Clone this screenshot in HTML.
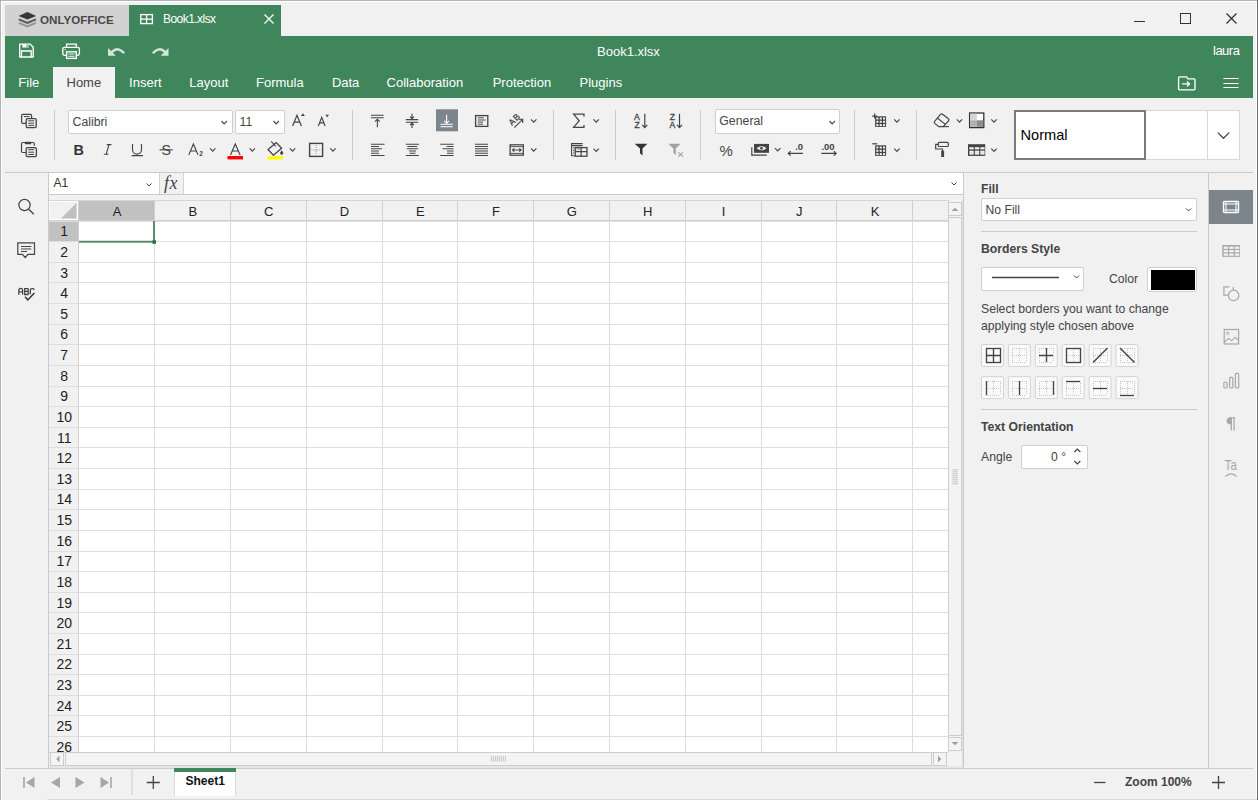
<!DOCTYPE html><html><head><meta charset="utf-8"><style>
*{margin:0;padding:0;box-sizing:border-box}
html,body{width:1258px;height:800px;overflow:hidden;background:#f1f1f1;font-family:"Liberation Sans",sans-serif;position:relative}
.a{position:absolute}
.t{position:absolute;white-space:nowrap;line-height:1}
svg{position:absolute;overflow:visible}
</style></head><body>
<div class="a" style="left:0;top:0;width:1258px;height:1px;background:#b3b3b3"></div>
<div class="a" style="left:0;top:0;width:1px;height:800px;background:#b3b3b3"></div>
<div class="a" style="left:1256px;top:1px;width:1px;height:799px;background:#fff"></div>
<div class="a" style="left:1257px;top:0;width:1px;height:800px;background:#6a6a6a"></div>
<div class="a" style="left:1px;top:1px;width:1256px;height:1px;background:#fff"></div>
<div class="a" style="left:1px;top:1px;width:1px;height:799px;background:#fff"></div>
<div class="a" style="left:5px;top:5px;width:124px;height:31px;background:#d2d2d2"></div>
<div class="a" style="left:129px;top:5px;width:152px;height:31px;background:#40865c"></div>
<svg style="left:0;top:0" width="1258" height="800">
<path d="M27.4 12 L36.2 16 L27.4 19.6 L18.6 16 Z" fill="#383838"/>
<path d="M18.8 19.4 L27.4 23 L36 19.4" fill="none" stroke="#585858" stroke-width="1.9"/>
<path d="M18.8 22.9 L27.4 26.5 L36 22.9" fill="none" stroke="#959595" stroke-width="1.9"/>
</svg>
<div class="t" style="left:40px;top:14px;font-size:11.6px;font-weight:bold;color:#474747;letter-spacing:0px">ONLYOFFICE</div>
<svg style="left:0;top:0" width="1258" height="800">
<rect x="140.8" y="14.6" width="11.6" height="9" fill="none" stroke="#fff" stroke-width="1.3"/>
<path d="M146.6 14.6 V23.6 M140.8 19.1 H152.4" stroke="#fff" stroke-width="1.3"/>
</svg>
<div class="t" style="left:163px;top:13px;font-size:12px;letter-spacing:-0.55px;color:#fff">Book1.xlsx</div>
<svg style="left:264px;top:14px" width="10" height="10" viewBox="0 0 10 10">
<path d="M0.5 0.5 L9.5 9.5 M9.5 0.5 L0.5 9.5" stroke="#fff" stroke-width="1.3"/></svg>
<div class="a" style="left:1134px;top:21px;width:11px;height:1px;background:#333"></div>
<div class="a" style="left:1180px;top:13px;width:11px;height:11px;border:1.3px solid #333"></div>
<svg style="left:1226px;top:13px" width="11" height="11" viewBox="0 0 11 11">
<path d="M0.5 0.5 L10.5 10.5 M10.5 0.5 L0.5 10.5" stroke="#333" stroke-width="1.3"/></svg>
<div class="a" style="left:5px;top:36px;width:1248px;height:62px;background:#40865c"></div>
<svg style="left:0;top:0" width="1258" height="800">
<path d="M19.7 44.1 H30.2 L33.2 47.3 V57 H19.7 Z" fill="none" stroke="#fff" stroke-width="1.35" stroke-linejoin="round"/>
<path d="M22.3 44.1 h6.2 v3.4 h-6.2 z" fill="#fff"/>
<path d="M27.1 44.6 v2.4" stroke="#40865c" stroke-width="1"/>
<path d="M21.5 57 V51 H31.2 V57" fill="none" stroke="#fff" stroke-width="1.35"/>
</svg>
<svg style="left:0;top:0" width="1258" height="800">
<path d="M66.6 47.2 V44.1 H76.3 V47.2" fill="none" stroke="#fff" stroke-width="1.35"/>
<rect x="62.8" y="47.3" width="16.6" height="8" rx="1.8" fill="none" stroke="#fff" stroke-width="1.35"/>
<rect x="66.6" y="51.8" width="9.7" height="6.6" fill="#40865c" stroke="#fff" stroke-width="1.35"/>
<path d="M68.3 54 H74.6 M68.3 56.3 H74.6" stroke="#fff" stroke-width="0.9"/>
<circle cx="65.2" cy="49.5" r="0.7" fill="#fff"/>
</svg>
<svg style="left:0;top:0" width="1258" height="800" opacity="0.78">
<path d="M111.5 52.5 Q117.5 45.8 124.2 53.2" fill="none" stroke="#fff" stroke-width="2.4"/>
<path d="M108 48 V55.8 H115.8 Z" fill="#fff"/>
<path d="M152.8 53.2 Q159.5 45.8 165.5 52.5" fill="none" stroke="#fff" stroke-width="2.4"/>
<path d="M168.5 48 V55.8 H160.7 Z" fill="#fff"/>
</svg>
<div class="t" style="left:597px;top:45px;font-size:13px;color:#fff">Book1.xlsx</div>
<div class="t" style="left:1213px;top:44px;font-size:13px;letter-spacing:-0.5px;color:#fff">laura</div>
<div class="a" style="left:53px;top:67px;width:62px;height:31px;background:#f1f1f1"></div>
<div class="t" style="left:18.3px;top:75.5px;font-size:13px;color:#fff">File</div>
<div class="t" style="left:66.5px;top:75.5px;font-size:13px;color:#444">Home</div>
<div class="t" style="left:129.1px;top:75.5px;font-size:13px;color:#fff">Insert</div>
<div class="t" style="left:189.3px;top:75.5px;font-size:13px;color:#fff">Layout</div>
<div class="t" style="left:256.0px;top:75.5px;font-size:13px;color:#fff">Formula</div>
<div class="t" style="left:331.9px;top:75.5px;font-size:13px;color:#fff">Data</div>
<div class="t" style="left:386.6px;top:75.5px;font-size:13px;color:#fff">Collaboration</div>
<div class="t" style="left:492.7px;top:75.5px;font-size:13px;color:#fff">Protection</div>
<div class="t" style="left:579.5px;top:75.5px;font-size:13px;color:#fff">Plugins</div>
<svg style="left:0;top:0" width="1258" height="800">
<path d="M1178.6 77.8 a1 1 0 0 1 1 -1 H1186.6 L1188 78.8 H1194 a1 1 0 0 1 1 1 V88.8 a1 1 0 0 1 -1 1 H1179.6 a1 1 0 0 1 -1 -1 Z" fill="none" stroke="#fff" stroke-width="1.35"/>
<path d="M1182 83.9 H1189.3 M1187 81.5 L1189.5 83.9 L1187 86.3" fill="none" stroke="#fff" stroke-width="1.35"/>
</svg>
<svg style="left:1223px;top:77px" width="16" height="12" viewBox="0 0 16 12">
<path d="M0.4 1.5 H15.6 M0.4 6.5 H15.6 M0.4 10.5 H15.6" stroke="#fff" stroke-width="1.2"/></svg>
<div class="a" style="left:5px;top:172px;width:1248px;height:1px;background:#cbcbcb"></div>
<div class="a" style="left:54px;top:110px;width:1px;height:50px;background:#cbcbcb"></div>
<div class="a" style="left:352px;top:110px;width:1px;height:50px;background:#cbcbcb"></div>
<div class="a" style="left:553px;top:110px;width:1px;height:50px;background:#cbcbcb"></div>
<div class="a" style="left:615px;top:110px;width:1px;height:50px;background:#cbcbcb"></div>
<div class="a" style="left:700px;top:110px;width:1px;height:50px;background:#cbcbcb"></div>
<div class="a" style="left:854px;top:110px;width:1px;height:50px;background:#cbcbcb"></div>
<div class="a" style="left:916px;top:110px;width:1px;height:50px;background:#cbcbcb"></div>
<div class="a" style="left:68px;top:110px;width:165px;height:24px;background:#fff;border:1px solid #cfcfcf;border-radius:2px"></div>
<div class="t" style="left:72.5px;top:116px;font-size:12.3px;color:#444">Calibri</div>
<div class="a" style="left:235px;top:110px;width:50px;height:24px;background:#fff;border:1px solid #cfcfcf;border-radius:2px"></div>
<div class="t" style="left:239.5px;top:116px;font-size:12.3px;color:#444">11</div>
<div class="a" style="left:715px;top:109px;width:125px;height:25px;background:#fff;border:1px solid #cfcfcf;border-radius:2px"></div>
<div class="t" style="left:719.3px;top:115px;font-size:12.3px;color:#444">General</div>
<svg style="left:0;top:0" width="1258" height="800" viewBox="0 0 1258 800"><rect x="21.6" y="114.3" width="10" height="9" rx="1.3" stroke="#444" fill="none" stroke-width="1.2"/><path d="M23.8 116.6 h6" stroke="#444" stroke-width="1"/><rect x="26.2" y="118.6" width="10" height="9" rx="1.3" fill="#f1f1f1" stroke="#444" stroke-width="1.3"/><path d="M28.2 120.8 h6 M28.2 123.2 h6 M28.2 125.4 h6" stroke="#444" stroke-width="1"/><path d="M26 152.5 h-3.3 a1.2 1.2 0 0 1 -1.2 -1.2 v-7.6 a1.2 1.2 0 0 1 1.2 -1.2 h10.4 a1.2 1.2 0 0 1 1.2 1.2 v2" stroke="#444" fill="none" stroke-width="1.2"/><rect x="24.8" y="141.8" width="6.5" height="2.5" rx="0.8" fill="#444"/><rect x="26.2" y="147.6" width="10.2" height="9" rx="1.3" fill="#f1f1f1" stroke="#444" stroke-width="1.3"/><path d="M28.2 149.7 h6 M28.2 152.2 h6 M28.2 154.5 h6" stroke="#444" stroke-width="1"/><path d="M221.5 121.0 l2.7 2.8 l2.7 -2.8" fill="none" stroke="#444" stroke-width="1.15"/><path d="M273.5 121.0 l2.7 2.8 l2.7 -2.8" fill="none" stroke="#444" stroke-width="1.15"/><path d="M829.5 121.0 l2.7 2.8 l2.7 -2.8" fill="none" stroke="#444" stroke-width="1.15"/><path d="M292.6 126 L297 115.3 L301.4 126 M294.2 122.2 H299.8" fill="none" stroke="#444" stroke-width="1.2"/><path d="M301 116 l1.9 -2.8 l1.9 2.8 z" fill="#444"/><path d="M318.3 126 L321.7 117.3 L325.1 126 M319.5 122.9 H323.9" fill="none" stroke="#444" stroke-width="1.15"/><path d="M325.4 114.8 l1.8 2.4 l1.8 -2.4 z" fill="#444"/><text x="73.6" y="154.6" font-family="Liberation Sans" font-weight="bold" font-size="14.4" fill="#333">B</text><path d="M106.8 144.6 h4.6 M103.8 154.2 h4.6 M109 144.6 L106.2 154.2" fill="none" stroke="#444" stroke-width="1.1"/><path d="M132.5 144 v5.6 a4.5 4.5 0 0 0 9 0 v-5.6 M131.6 155.6 h11.4" fill="none" stroke="#444" stroke-width="1.15"/><text x="161.6" y="154.6" font-family="Liberation Sans" font-size="14.2" fill="#444">S</text><path d="M159.6 149.8 h13" stroke="#444" stroke-width="1.15"/><path d="M188.8 154.9 L193.4 144 L198 154.9 M190.6 151 H196.2" fill="none" stroke="#444" stroke-width="1.15"/><text x="199.2" y="155.8" font-family="Liberation Sans" font-weight="bold" font-size="6.4" fill="#444">2</text><path d="M210.0 148.3 l2.7 2.8 l2.7 -2.8" fill="none" stroke="#444" stroke-width="1.15"/><path d="M230.5 154.9 L235.3 144 L240.1 154.9 M232.3 151 H238.3" fill="none" stroke="#444" stroke-width="1.15"/><rect x="227.5" y="156" width="15.5" height="3.4" fill="#f00"/><path d="M249.6 148.3 l2.7 2.8 l2.7 -2.8" fill="none" stroke="#444" stroke-width="1.15"/><path d="M276.3 142.6 L281.6 148.2 L273.4 155.2 L268 149.5 Z" fill="none" stroke="#444" stroke-width="1.25" stroke-linejoin="round"/><path d="M271.2 141.4 L275.7 146.3" stroke="#444" stroke-width="1.1"/><path d="M281.7 150.2 l1.5 2.3 a1.6 1.6 0 1 1 -3 0 z" fill="#444"/><rect x="267.7" y="156.1" width="15.3" height="3.4" fill="#ff0"/><path d="M289.8 148.3 l2.7 2.8 l2.7 -2.8" fill="none" stroke="#444" stroke-width="1.15"/><rect x="309.6" y="143.4" width="13" height="13" fill="none" stroke="#444" stroke-width="1.4"/><path d="M316.1 145 v10 M311.2 149.9 h10" stroke="#999" stroke-width="1" stroke-dasharray="1 1"/><path d="M330.2 148.3 l2.7 2.8 l2.7 -2.8" fill="none" stroke="#444" stroke-width="1.15"/><path d="M371 115.2 h12.6 M371 117.8 h12.6 M377.4 127.2 V119.2 M375 121.6 l2.4 -2.4 l2.4 2.4" fill="none" stroke="#444" stroke-width="1.1"/><path d="M405.8 119.6 h12.4 M405.8 122.3 h12.4 M412 113.7 v5 M410 116.7 l2 2 l2 -2 M412 128 v-5 M410 125.1 l2 -2 l2 2" fill="none" stroke="#444" stroke-width="1.1"/><rect x="436" y="109.3" width="22" height="22" fill="#7d858c"/><path d="M440.5 124.2 h12.3 M440.5 126.8 h12.3 M446.6 114.7 v8.6 M444.2 120.9 l2.4 2.4 l2.4 -2.4" fill="none" stroke="#fff" stroke-width="1.1"/><rect x="475.6" y="115.6" width="12.2" height="10.8" fill="none" stroke="#444" stroke-width="1.3"/><path d="M477.8 117.8 h6 M477.8 120 h8 M477.8 122.1 h5.2 M477.8 124.2 h5.2" stroke="#444" stroke-width="0.95"/><text x="0" y="0" font-family="Liberation Sans" font-size="8.6" fill="#444" stroke="#444" stroke-width="0.3" letter-spacing="0.8" transform="translate(512 125.9) rotate(-45)">AB</text><path d="M514.3 127.6 L522.6 119.3 M518.8 119.2 h3.9 v3.9" fill="none" stroke="#444" stroke-width="1.15"/><path d="M531.0 119.3 l2.7 2.8 l2.7 -2.8" fill="none" stroke="#444" stroke-width="1.15"/><path d="M371.0 144.2 H384.6 M371.0 146.5 H379.0 M371.0 148.7 H382.0 M371.0 151.0 H379.0 M371.0 153.3 H379.0 M371.0 155.5 H384.6 " stroke="#444" stroke-width="1.05"/><path d="M405.8 144.2 H418.9 M407.4 146.5 H417.2 M406.8 148.7 H418.2 M409.0 151.0 H416.0 M409.4 153.3 H415.6 M405.8 155.5 H418.9 " stroke="#444" stroke-width="1.05"/><path d="M440.2 144.2 H453.6 M446.6 146.5 H453.6 M442.5 148.7 H453.6 M447.0 151.0 H453.6 M447.0 153.3 H453.6 M440.2 155.5 H453.6 " stroke="#444" stroke-width="1.05"/><path d="M475.0 144.2 H488.0 M475.0 146.5 H488.0 M475.0 148.7 H488.0 M475.0 151.0 H488.0 M475.0 153.3 H488.0 M475.0 155.5 H488.0 " stroke="#444" stroke-width="1.05"/><rect x="510.1" y="144.8" width="13.2" height="10.4" fill="none" stroke="#444" stroke-width="1.25"/><path d="M510 146.6 h13.4 M510 153.4 h13.4" stroke="#444" stroke-width="0.9"/><path d="M512.3 150 h9 M514.3 148.4 l-1.8 1.6 l1.8 1.6 M519.3 148.4 l1.8 1.6 l-1.8 1.6" fill="none" stroke="#444" stroke-width="1.1"/><path d="M531.0 148.3 l2.7 2.8 l2.7 -2.8" fill="none" stroke="#444" stroke-width="1.15"/><path d="M584 116.4 V114.2 H573.6 L579.2 120.8 L573.6 127.3 H584 V125" fill="none" stroke="#444" stroke-width="1.25"/><path d="M593.5 119.4 l2.7 2.8 l2.7 -2.8" fill="none" stroke="#444" stroke-width="1.15"/><path d="M571.6 143.6 h11 M571.6 145.6 h11 M571.6 143 V156 M573.6 147.5 v1 M573.6 150 v1 M573.6 152.5 v1 M571.6 155.8 h3" fill="none" stroke="#444" stroke-width="1.1"/><rect x="575.2" y="147.6" width="11.8" height="8.6" fill="#f1f1f1" stroke="#444" stroke-width="1.3"/><path d="M575.2 151.6 h11.8 M581.1 147.6 v8.6" stroke="#444" stroke-width="1.2"/><path d="M576.6 149 h3.4" stroke="#999" stroke-width="1.4"/><path d="M593.5 148.7 l2.7 2.8 l2.7 -2.8" fill="none" stroke="#444" stroke-width="1.15"/><text x="634" y="120.2" font-family="Liberation Sans" font-size="8.6" fill="#444" stroke="#444" stroke-width="0.3">A</text><text x="634.4" y="128.2" font-family="Liberation Sans" font-size="8.6" fill="#444" stroke="#444" stroke-width="0.3">Z</text><path d="M644.8 113.8 v13.4 M642.3 124.9 l2.5 2.8 l2.5 -2.8" fill="none" stroke="#444" stroke-width="1.2"/><text x="669.8" y="120.2" font-family="Liberation Sans" font-size="8.6" fill="#444" stroke="#444" stroke-width="0.3">Z</text><text x="669.4" y="128.2" font-family="Liberation Sans" font-size="8.6" fill="#444" stroke="#444" stroke-width="0.3">A</text><path d="M679.5 113.8 v13.4 M677 124.9 l2.5 2.8 l2.5 -2.8" fill="none" stroke="#444" stroke-width="1.2"/><path d="M634.7 143.7 H647.4 L642.5 148.6 V155.4 L640 153.2 V148.6 Z" fill="#333"/><path d="M668.2 143.7 H680.6 L675.8 148.6 V155 L673.4 152.8 V148.6 Z" fill="#a3a3a3"/><path d="M678.3 152.4 l4.6 4.2 M682.9 152.4 l-4.6 4.2" stroke="#a3a3a3" stroke-width="1.1"/><text x="719.6" y="156" font-family="Liberation Sans" font-size="15" fill="#444">%</text><rect x="754" y="143.9" width="15" height="8.9" fill="#444"/><path d="M756.5 148.3 q4.9 -4 10 0 q-5.1 4 -10 0 z" fill="#f1f1f1"/><circle cx="761.5" cy="148.3" r="1.4" fill="#444"/><path d="M751.8 147.2 v8 h15" fill="none" stroke="#444" stroke-width="1.2"/><path d="M775.0 148.2 l2.7 2.8 l2.7 -2.8" fill="none" stroke="#444" stroke-width="1.15"/><text x="795.2" y="149.6" font-family="Liberation Sans" font-size="9.5" font-weight="bold" fill="#444">.0</text><path d="M803 153.4 h-14.5 M790.6 151.2 l-2.3 2.2 l2.3 2.2" fill="none" stroke="#444" stroke-width="1.2"/><text x="821.4" y="149.6" font-family="Liberation Sans" font-size="9.5" font-weight="bold" fill="#444">.00</text><path d="M821.2 153.4 h14.8 M833.8 151.2 l2.3 2.2 l-2.3 2.2" fill="none" stroke="#444" stroke-width="1.2"/><rect x="875.1" y="116.3" width="11" height="10.6" fill="#444"/><rect x="876.3" y="117.5" width="2.1" height="2" fill="#f1f1f1"/><rect x="876.3" y="120.8" width="2.1" height="2" fill="#f1f1f1"/><rect x="876.3" y="124.1" width="2.1" height="2" fill="#f1f1f1"/><rect x="879.7" y="117.5" width="2.1" height="2" fill="#f1f1f1"/><rect x="879.7" y="120.8" width="2.1" height="2" fill="#f1f1f1"/><rect x="879.7" y="124.1" width="2.1" height="2" fill="#f1f1f1"/><rect x="883.0" y="117.5" width="2.1" height="2" fill="#f1f1f1"/><rect x="883.0" y="120.8" width="2.1" height="2" fill="#f1f1f1"/><rect x="883.0" y="124.1" width="2.1" height="2" fill="#f1f1f1"/><path d="M872.2 116.1 h5 M874.7 113.6 v5" stroke="#444" stroke-width="1.2"/><path d="M894.2 119.3 l2.7 2.8 l2.7 -2.8" fill="none" stroke="#444" stroke-width="1.15"/><rect x="875.1" y="145.3" width="11" height="10.6" fill="#444"/><rect x="876.3" y="146.5" width="2.1" height="2" fill="#f1f1f1"/><rect x="876.3" y="149.8" width="2.1" height="2" fill="#f1f1f1"/><rect x="876.3" y="153.1" width="2.1" height="2" fill="#f1f1f1"/><rect x="879.7" y="146.5" width="2.1" height="2" fill="#f1f1f1"/><rect x="879.7" y="149.8" width="2.1" height="2" fill="#f1f1f1"/><rect x="879.7" y="153.1" width="2.1" height="2" fill="#f1f1f1"/><rect x="883.0" y="146.5" width="2.1" height="2" fill="#f1f1f1"/><rect x="883.0" y="149.8" width="2.1" height="2" fill="#f1f1f1"/><rect x="883.0" y="153.1" width="2.1" height="2" fill="#f1f1f1"/><path d="M872.2 143.8 h5" stroke="#444" stroke-width="1.2"/><path d="M894.2 148.6 l2.7 2.8 l2.7 -2.8" fill="none" stroke="#444" stroke-width="1.15"/><path d="M942.6 114.2 L948.4 118.8 a1.5 1.5 0 0 1 0.2 2.1 L943.2 126.6 H938.8 L934.8 123.4 a1.5 1.5 0 0 1 -0.2 -2.1 L940.5 114.4 a1.5 1.5 0 0 1 2.1 -0.2 Z" fill="none" stroke="#444" stroke-width="1.2"/><path d="M937.6 118.2 L945.8 124.6" stroke="#444" stroke-width="1.1"/><path d="M943 126.6 h6" stroke="#444" stroke-width="1.1"/><path d="M956.8 119.3 l2.7 2.8 l2.7 -2.8" fill="none" stroke="#444" stroke-width="1.15"/><rect x="969.6" y="113" width="14.2" height="14.6" fill="#fff" stroke="#333" stroke-width="1.3"/><rect x="970.3" y="113.7" width="6.5" height="6.6" fill="#d4d4d4"/><rect x="970.3" y="120.3" width="6.5" height="6.6" fill="#b0b0b0"/><rect x="976.8" y="120.3" width="6.4" height="6.6" fill="#8e8e8e"/><path d="M991.3 119.3 l2.7 2.8 l2.7 -2.8" fill="none" stroke="#444" stroke-width="1.15"/><rect x="938.3" y="142.3" width="10" height="4.2" rx="0.9" fill="none" stroke="#444" stroke-width="1.2"/><path d="M938.3 144.4 h-2.6 v4.6 h6.8 v2" fill="none" stroke="#444" stroke-width="1.2"/><rect x="941.2" y="150.8" width="2.9" height="6.2" fill="#444"/><rect x="968" y="144.2" width="17.2" height="11.7" fill="#444"/><rect x="969.4" y="147.2" width="4.3" height="2.2" fill="#f1f1f1"/><rect x="969.4" y="150.7" width="4.3" height="2.2" fill="#f1f1f1"/><rect x="974.9" y="147.2" width="4.3" height="2.2" fill="#f1f1f1"/><rect x="974.9" y="150.7" width="4.3" height="2.2" fill="#f1f1f1"/><rect x="980.3" y="147.2" width="4.3" height="2.2" fill="#f1f1f1"/><rect x="980.3" y="150.7" width="4.3" height="2.2" fill="#f1f1f1"/><rect x="969.4" y="152.9" width="4.3" height="1.7" fill="#f1f1f1"/><rect x="974.85" y="152.9" width="4.3" height="1.7" fill="#f1f1f1"/><rect x="980.3" y="152.9" width="4.3" height="1.7" fill="#f1f1f1"/><path d="M991.3 148.6 l2.7 2.8 l2.7 -2.8" fill="none" stroke="#444" stroke-width="1.15"/></svg>
<div class="a" style="left:1014px;top:110px;width:226px;height:50px;background:#fff;border:1px solid #d8d8d8"></div>
<div class="a" style="left:1014px;top:110px;width:132px;height:50px;border:2px solid #7a7a7a"></div>
<div class="a" style="left:1207px;top:111px;width:1px;height:48px;background:#d8d8d8"></div>
<div class="t" style="left:1020.5px;top:128px;font-size:14.6px;color:#000">Normal</div>
<svg style="left:1217px;top:132px" width="13" height="7" viewBox="0 0 13 7"><path d="M0.8 0.6 L6.5 6.3 L12.2 0.6" fill="none" stroke="#444" stroke-width="1.25"/></svg>
<div class="a" style="left:48px;top:173px;width:1px;height:595px;background:#cbcbcb"></div>
<svg style="left:0;top:0" width="1258" height="800" viewBox="0 0 1258 800"><circle cx="24.5" cy="205" r="5.6" fill="none" stroke="#444" stroke-width="1.2"/><path d="M28.5 209 L33.8 214.3" stroke="#444" stroke-width="1.3"/><path d="M17.8 242.8 h16.7 v11.5 h-6.5 l-2.8 3.2 l-2.8 -3.2 h-4.6 Z" fill="none" stroke="#444" stroke-width="1.2"/><path d="M21 246.5 h10.3 M21 249 h10.3 M21 251.5 h6" stroke="#444" stroke-width="1.1"/><path d="M18.8 294.7 V290.3 a1.9 1.9 0 0 1 3.8 0 V294.7 M18.8 291.9 h3.8" fill="none" stroke="#444" stroke-width="1.3"/><path d="M24.7 288.7 h2.9 a0.6 0.6 0 0 1 0.6 0.6 v4.6 a0.6 0.6 0 0 1 -0.6 0.6 h-2.9 Z M24.7 291.4 h3.5" fill="none" stroke="#444" stroke-width="1.3"/><path d="M30.3 294.3 V290.5 a1.8 1.8 0 0 1 1.8 -1.8 h0.6 a1.4 1.4 0 0 1 1.4 1.4" fill="none" stroke="#444" stroke-width="1.3"/><path d="M25.1 296.7 L27.8 299.9 L34.4 293.1" fill="none" stroke="#333" stroke-width="1.5"/></svg>
<div class="a" style="left:49px;top:173px;width:914px;height:22px;background:#fff"></div>
<div class="a" style="left:49px;top:194px;width:914px;height:1px;background:#cbcbcb"></div>
<div class="a" style="left:159px;top:173px;width:1px;height:21px;background:#d4d4d4"></div>
<div class="a" style="left:160px;top:173px;width:23px;height:21px;background:#f1f1f1"></div>
<div class="a" style="left:183px;top:173px;width:1px;height:21px;background:#d4d4d4"></div>
<div class="t" style="left:53.5px;top:177px;font-size:12px;color:#333">A1</div>
<div class="t" style="left:164px;top:174px;font-size:18px;letter-spacing:0.6px;color:#444;font-family:'Liberation Serif',serif;font-style:italic">fx</div>
<svg style="left:0;top:0" width="1258" height="800"><path d="M146.5 183.5 l2.5 2.5 l2.5 -2.5" fill="none" stroke="#444"/><path d="M951.5 182.5 l2.5 2.5 l2.5 -2.5" fill="none" stroke="#444"/></svg>
<div class="a" style="left:49px;top:200px;width:899px;height:552px;background:#fff;overflow:hidden">
<div class="a" style="left:0;top:0;width:899px;height:21px;background:#f1f1f1"></div>
<div class="a" style="left:0;top:0;width:29px;height:552px;background:#f1f1f1"></div>
<div class="a" style="left:30px;top:0;width:75px;height:21px;background:#c1c1c1"></div>
<div class="a" style="left:0;top:21px;width:29px;height:21px;background:#c1c1c1"></div>
<svg style="left:0;top:0" width="899" height="552"><path d="M105.5 0 V552" stroke="#dcdcdc" stroke-width="1"/><path d="M181.5 0 V552" stroke="#dcdcdc" stroke-width="1"/><path d="M257.5 0 V552" stroke="#dcdcdc" stroke-width="1"/><path d="M333.5 0 V552" stroke="#dcdcdc" stroke-width="1"/><path d="M408.5 0 V552" stroke="#dcdcdc" stroke-width="1"/><path d="M484.5 0 V552" stroke="#dcdcdc" stroke-width="1"/><path d="M560.5 0 V552" stroke="#dcdcdc" stroke-width="1"/><path d="M636.5 0 V552" stroke="#dcdcdc" stroke-width="1"/><path d="M712.5 0 V552" stroke="#dcdcdc" stroke-width="1"/><path d="M787.5 0 V552" stroke="#dcdcdc" stroke-width="1"/><path d="M863.5 0 V552" stroke="#dcdcdc" stroke-width="1"/><path d="M939.5 0 V552" stroke="#dcdcdc" stroke-width="1"/><path d="M105.5 0 V20.5" stroke="#cfcfcf" stroke-width="1"/><path d="M181.5 0 V20.5" stroke="#cfcfcf" stroke-width="1"/><path d="M257.5 0 V20.5" stroke="#cfcfcf" stroke-width="1"/><path d="M333.5 0 V20.5" stroke="#cfcfcf" stroke-width="1"/><path d="M408.5 0 V20.5" stroke="#cfcfcf" stroke-width="1"/><path d="M484.5 0 V20.5" stroke="#cfcfcf" stroke-width="1"/><path d="M560.5 0 V20.5" stroke="#cfcfcf" stroke-width="1"/><path d="M636.5 0 V20.5" stroke="#cfcfcf" stroke-width="1"/><path d="M712.5 0 V20.5" stroke="#cfcfcf" stroke-width="1"/><path d="M787.5 0 V20.5" stroke="#cfcfcf" stroke-width="1"/><path d="M863.5 0 V20.5" stroke="#cfcfcf" stroke-width="1"/><path d="M939.5 0 V20.5" stroke="#cfcfcf" stroke-width="1"/><path d="M0 21.5 H899" stroke="#dedede" stroke-width="1"/><path d="M0 41.5 H899" stroke="#dedede" stroke-width="1"/><path d="M0 62.5 H899" stroke="#dedede" stroke-width="1"/><path d="M0 82.5 H899" stroke="#dedede" stroke-width="1"/><path d="M0 103.5 H899" stroke="#dedede" stroke-width="1"/><path d="M0 124.5 H899" stroke="#dedede" stroke-width="1"/><path d="M0 144.5 H899" stroke="#dedede" stroke-width="1"/><path d="M0 165.5 H899" stroke="#dedede" stroke-width="1"/><path d="M0 186.5 H899" stroke="#dedede" stroke-width="1"/><path d="M0 206.5 H899" stroke="#dedede" stroke-width="1"/><path d="M0 227.5 H899" stroke="#dedede" stroke-width="1"/><path d="M0 247.5 H899" stroke="#dedede" stroke-width="1"/><path d="M0 268.5 H899" stroke="#dedede" stroke-width="1"/><path d="M0 289.5 H899" stroke="#dedede" stroke-width="1"/><path d="M0 309.5 H899" stroke="#dedede" stroke-width="1"/><path d="M0 330.5 H899" stroke="#dedede" stroke-width="1"/><path d="M0 351.5 H899" stroke="#dedede" stroke-width="1"/><path d="M0 371.5 H899" stroke="#dedede" stroke-width="1"/><path d="M0 392.5 H899" stroke="#dedede" stroke-width="1"/><path d="M0 412.5 H899" stroke="#dedede" stroke-width="1"/><path d="M0 433.5 H899" stroke="#dedede" stroke-width="1"/><path d="M0 454.5 H899" stroke="#dedede" stroke-width="1"/><path d="M0 474.5 H899" stroke="#dedede" stroke-width="1"/><path d="M0 495.5 H899" stroke="#dedede" stroke-width="1"/><path d="M0 515.5 H899" stroke="#dedede" stroke-width="1"/><path d="M0 536.5 H899" stroke="#dedede" stroke-width="1"/><path d="M0 557.5 H899" stroke="#dedede" stroke-width="1"/><path d="M29.5 0 V552" stroke="#cfcfcf"/><path d="M0 20.5 H899" stroke="#cfcfcf"/><path d="M0 0.5 H899" stroke="#d5d5d5"/><rect x="0.5" y="1.5" width="28" height="18" fill="#f1f1f1" stroke="#fff" stroke-width="1"/><path d="M27.5 2.8 V18.5 H12.1 Z" fill="#c0c0c0"/><text x="68.1" y="15.5" text-anchor="middle" font-family="Liberation Sans" font-size="13" fill="#222">A</text><text x="143.9" y="15.5" text-anchor="middle" font-family="Liberation Sans" font-size="13" fill="#222">B</text><text x="219.7" y="15.5" text-anchor="middle" font-family="Liberation Sans" font-size="13" fill="#222">C</text><text x="295.5" y="15.5" text-anchor="middle" font-family="Liberation Sans" font-size="13" fill="#222">D</text><text x="371.3" y="15.5" text-anchor="middle" font-family="Liberation Sans" font-size="13" fill="#222">E</text><text x="447.1" y="15.5" text-anchor="middle" font-family="Liberation Sans" font-size="13" fill="#222">F</text><text x="522.9" y="15.5" text-anchor="middle" font-family="Liberation Sans" font-size="13" fill="#222">G</text><text x="598.7" y="15.5" text-anchor="middle" font-family="Liberation Sans" font-size="13" fill="#222">H</text><text x="674.5" y="15.5" text-anchor="middle" font-family="Liberation Sans" font-size="13" fill="#222">I</text><text x="750.3" y="15.5" text-anchor="middle" font-family="Liberation Sans" font-size="13" fill="#222">J</text><text x="826.1" y="15.5" text-anchor="middle" font-family="Liberation Sans" font-size="13" fill="#222">K</text><text x="15.2" y="36.3" text-anchor="middle" font-family="Liberation Sans" font-size="14" fill="#222">1</text><text x="15.2" y="56.9" text-anchor="middle" font-family="Liberation Sans" font-size="14" fill="#222">2</text><text x="15.2" y="77.5" text-anchor="middle" font-family="Liberation Sans" font-size="14" fill="#222">3</text><text x="15.2" y="98.2" text-anchor="middle" font-family="Liberation Sans" font-size="14" fill="#222">4</text><text x="15.2" y="118.8" text-anchor="middle" font-family="Liberation Sans" font-size="14" fill="#222">5</text><text x="15.2" y="139.4" text-anchor="middle" font-family="Liberation Sans" font-size="14" fill="#222">6</text><text x="15.2" y="160.0" text-anchor="middle" font-family="Liberation Sans" font-size="14" fill="#222">7</text><text x="15.2" y="180.7" text-anchor="middle" font-family="Liberation Sans" font-size="14" fill="#222">8</text><text x="15.2" y="201.3" text-anchor="middle" font-family="Liberation Sans" font-size="14" fill="#222">9</text><text x="15.2" y="221.9" text-anchor="middle" font-family="Liberation Sans" font-size="14" fill="#222">10</text><text x="15.2" y="242.5" text-anchor="middle" font-family="Liberation Sans" font-size="14" fill="#222">11</text><text x="15.2" y="263.1" text-anchor="middle" font-family="Liberation Sans" font-size="14" fill="#222">12</text><text x="15.2" y="283.7" text-anchor="middle" font-family="Liberation Sans" font-size="14" fill="#222">13</text><text x="15.2" y="304.4" text-anchor="middle" font-family="Liberation Sans" font-size="14" fill="#222">14</text><text x="15.2" y="325.0" text-anchor="middle" font-family="Liberation Sans" font-size="14" fill="#222">15</text><text x="15.2" y="345.6" text-anchor="middle" font-family="Liberation Sans" font-size="14" fill="#222">16</text><text x="15.2" y="366.2" text-anchor="middle" font-family="Liberation Sans" font-size="14" fill="#222">17</text><text x="15.2" y="386.8" text-anchor="middle" font-family="Liberation Sans" font-size="14" fill="#222">18</text><text x="15.2" y="407.5" text-anchor="middle" font-family="Liberation Sans" font-size="14" fill="#222">19</text><text x="15.2" y="428.1" text-anchor="middle" font-family="Liberation Sans" font-size="14" fill="#222">20</text><text x="15.2" y="448.7" text-anchor="middle" font-family="Liberation Sans" font-size="14" fill="#222">21</text><text x="15.2" y="469.3" text-anchor="middle" font-family="Liberation Sans" font-size="14" fill="#222">22</text><text x="15.2" y="489.9" text-anchor="middle" font-family="Liberation Sans" font-size="14" fill="#222">23</text><text x="15.2" y="510.6" text-anchor="middle" font-family="Liberation Sans" font-size="14" fill="#222">24</text><text x="15.2" y="531.2" text-anchor="middle" font-family="Liberation Sans" font-size="14" fill="#222">25</text><text x="15.2" y="551.8" text-anchor="middle" font-family="Liberation Sans" font-size="14" fill="#222">26</text><path d="M105 21 V42 M30 41.8 H105.5" fill="none" stroke="#568f6b" stroke-width="2"/><rect x="103.5" y="40.3" width="3.5" height="3.5" fill="#2f6b47"/></svg>
</div>
<div class="a" style="left:49px;top:195px;width:914px;height:5px;background:#f1f1f1"></div>
<div class="a" style="left:948px;top:200px;width:15px;height:552px;background:#f3f3f3;border-left:1px solid #d5d5d5"></div>
<div class="a" style="left:948px;top:752px;width:15px;height:16px;background:#f3f3f3"></div>
<div class="a" style="left:962px;top:200px;width:1px;height:568px;background:#dedede"></div>
<div class="a" style="left:49px;top:752px;width:899px;height:16px;background:#f3f3f3;border-top:1px solid #d5d5d5"></div>
<div class="a" style="left:49px;top:766px;width:914px;height:2px;background:#e6e6e6"></div>
<svg style="left:0;top:0" width="1258" height="800"><rect x="948.5" y="202.5" width="13" height="13" fill="#f4f4f4" stroke="#cdcdcd"/><path d="M951.5 211 l3.5 -3.2 l3.5 3.2 Z" fill="#a0a0a0"/><rect x="948.5" y="217.5" width="13" height="518" fill="#f4f4f4" stroke="#cdcdcd"/><path d="M952.3 469.8 h5.7 M952.3 471.8 h5.7 M952.3 473.8 h5.7 M952.3 475.8 h5.7 M952.3 477.8 h5.7 M952.3 479.8 h5.7 M952.3 481.8 h5.7 M952.3 483.8 h5.7 " stroke="#c6c6c6" stroke-width="1"/><rect x="948.5" y="737.5" width="13" height="13" fill="#f4f4f4" stroke="#cdcdcd"/><path d="M951.5 742 l3.5 3.2 l3.5 -3.2 Z" fill="#a0a0a0"/><rect x="50.5" y="752.5" width="13" height="13" fill="#f4f4f4" stroke="#cdcdcd"/><path d="M59.5 755.5 l-3.2 3.5 l3.2 3.5 Z" fill="#a0a0a0"/><rect x="65.5" y="752.5" width="866" height="13" fill="#f4f4f4" stroke="#cdcdcd"/><path d="M491.3 755.8 v5.9 M493.3 755.8 v5.9 M495.3 755.8 v5.9 M497.3 755.8 v5.9 M499.3 755.8 v5.9 M501.3 755.8 v5.9 M503.3 755.8 v5.9 M505.3 755.8 v5.9 " stroke="#c6c6c6" stroke-width="1"/><rect x="933.5" y="752.5" width="13" height="13" fill="#f4f4f4" stroke="#cdcdcd"/><path d="M938 755.5 l3.2 3.5 l-3.2 3.5 Z" fill="#a0a0a0"/></svg>
<div class="a" style="left:963px;top:173px;width:1px;height:595px;background:#cbcbcb"></div>
<div class="a" style="left:1208px;top:173px;width:1px;height:595px;background:#cbcbcb"></div>
<div class="t" style="left:981.0px;top:182.5px;font-size:12.20px;color:#444;font-weight:bold;">Fill</div>
<div class="a" style="left:981px;top:198px;width:216px;height:23px;background:#fff;border:1px solid #cfcfcf;border-radius:2px"></div>
<div class="t" style="left:985.5px;top:203.5px;font-size:12.20px;color:#444;">No Fill</div>
<div class="a" style="left:981px;top:231px;width:216px;height:1px;background:#cbcbcb"></div>
<div class="t" style="left:981.0px;top:242.5px;font-size:12.20px;color:#444;font-weight:bold;">Borders Style</div>
<div class="a" style="left:981px;top:267px;width:103px;height:24px;background:#fff;border:1px solid #cfcfcf;border-radius:2px"></div>
<div class="t" style="left:1109.0px;top:273.0px;font-size:12.20px;color:#444;">Color</div>
<div class="a" style="left:1147px;top:267px;width:50px;height:25px;background:#fff;border:1px solid #cfcfcf;border-radius:2px"></div>
<div class="a" style="left:1150.5px;top:269.5px;width:44px;height:20px;background:#000"></div>
<div class="t" style="left:981.0px;top:303.0px;font-size:12.20px;color:#444;">Select borders you want to change</div>
<div class="t" style="left:981.0px;top:319.5px;font-size:12.20px;color:#444;">applying style chosen above</div>
<div class="a" style="left:981px;top:409px;width:216px;height:1px;background:#cbcbcb"></div>
<div class="t" style="left:981.0px;top:421.0px;font-size:12.20px;color:#444;font-weight:bold;">Text Orientation</div>
<div class="t" style="left:981.0px;top:451.0px;font-size:12.20px;color:#444;">Angle</div>
<div class="a" style="left:1021px;top:445px;width:67px;height:24px;background:#fff;border:1px solid #cfcfcf;border-radius:2px"></div>
<div class="t" style="left:1051.0px;top:451.0px;font-size:12.20px;color:#444;">0 °</div>
<svg style="left:0;top:0" width="1258" height="800"><path d="M992 277.5 H1059" stroke="#444" stroke-width="1.35"/><path d="M1074 275.5 l2.5 2.5 l2.5 -2.5" fill="none" stroke="#444"/><path d="M1186 208.5 l2.5 2.5 l2.5 -2.5" fill="none" stroke="#444"/><path d="M1074.4 452 l2.95 -3 l2.95 3 M1074.4 461 l2.95 3 l2.95 -3" fill="none" stroke="#444" stroke-width="1.2"/><rect x="981.5" y="344.5" width="22" height="22" rx="1.5" fill="#fafafa" stroke="#d3d3d3"/><rect x="986.5" y="348.5" width="14" height="14" fill="none" stroke="#444" stroke-width="1.35"/><path d="M993.5 348.5 v14 M986.5 355.5 h14" stroke="#444" stroke-width="1.35"/><rect x="1008.4" y="344.5" width="22" height="22" rx="1.5" fill="#fafafa" stroke="#d3d3d3"/><g opacity="0.45"><path d="M1012.5 348.0 v14" stroke="#888" stroke-width="1" stroke-dasharray="1 1"/><path d="M1012.0 348.5 h14" stroke="#888" stroke-width="1" stroke-dasharray="1 1"/><path d="M1019.5 348.0 v14" stroke="#888" stroke-width="1" stroke-dasharray="1 1"/><path d="M1012.0 355.5 h14" stroke="#888" stroke-width="1" stroke-dasharray="1 1"/><path d="M1026.5 348.0 v14" stroke="#888" stroke-width="1" stroke-dasharray="1 1"/><path d="M1012.0 362.5 h14" stroke="#888" stroke-width="1" stroke-dasharray="1 1"/></g><rect x="1035.3" y="344.5" width="22" height="22" rx="1.5" fill="#fafafa" stroke="#d3d3d3"/><g opacity="0.45"><path d="M1039.5 348.0 v14" stroke="#888" stroke-width="1" stroke-dasharray="1 1"/><path d="M1039.0 348.5 h14" stroke="#888" stroke-width="1" stroke-dasharray="1 1"/><path d="M1046.5 348.0 v14" stroke="#888" stroke-width="1" stroke-dasharray="1 1"/><path d="M1039.0 355.5 h14" stroke="#888" stroke-width="1" stroke-dasharray="1 1"/><path d="M1053.5 348.0 v14" stroke="#888" stroke-width="1" stroke-dasharray="1 1"/><path d="M1039.0 362.5 h14" stroke="#888" stroke-width="1" stroke-dasharray="1 1"/></g><path d="M1046.5 348.0 v14 M1039.0 355.5 h14" stroke="#444" stroke-width="1.35"/><rect x="1062.2" y="344.5" width="22" height="22" rx="1.5" fill="#fafafa" stroke="#d3d3d3"/><g opacity="0.45"><path d="M1066.5 348.0 v14" stroke="#888" stroke-width="1" stroke-dasharray="1 1"/><path d="M1066.0 348.5 h14" stroke="#888" stroke-width="1" stroke-dasharray="1 1"/><path d="M1073.5 348.0 v14" stroke="#888" stroke-width="1" stroke-dasharray="1 1"/><path d="M1066.0 355.5 h14" stroke="#888" stroke-width="1" stroke-dasharray="1 1"/><path d="M1080.5 348.0 v14" stroke="#888" stroke-width="1" stroke-dasharray="1 1"/><path d="M1066.0 362.5 h14" stroke="#888" stroke-width="1" stroke-dasharray="1 1"/></g><rect x="1066.5" y="348.5" width="14" height="14" fill="none" stroke="#444" stroke-width="1.35"/><rect x="1089.1" y="344.5" width="22" height="22" rx="1.5" fill="#fafafa" stroke="#d3d3d3"/><g opacity="0.45"><path d="M1093.5 348.0 v14" stroke="#888" stroke-width="1" stroke-dasharray="1 1"/><path d="M1093.0 348.5 h14" stroke="#888" stroke-width="1" stroke-dasharray="1 1"/><path d="M1100.5 348.0 v14" stroke="#888" stroke-width="1" stroke-dasharray="1 1"/><path d="M1093.0 355.5 h14" stroke="#888" stroke-width="1" stroke-dasharray="1 1"/><path d="M1107.5 348.0 v14" stroke="#888" stroke-width="1" stroke-dasharray="1 1"/><path d="M1093.0 362.5 h14" stroke="#888" stroke-width="1" stroke-dasharray="1 1"/></g><path d="M1093.0 362.5 L1107.5 348.0" stroke="#444" stroke-width="1.35"/><rect x="1116.0" y="344.5" width="22" height="22" rx="1.5" fill="#fafafa" stroke="#d3d3d3"/><g opacity="0.45"><path d="M1120.5 348.0 v14" stroke="#888" stroke-width="1" stroke-dasharray="1 1"/><path d="M1120.0 348.5 h14" stroke="#888" stroke-width="1" stroke-dasharray="1 1"/><path d="M1127.5 348.0 v14" stroke="#888" stroke-width="1" stroke-dasharray="1 1"/><path d="M1120.0 355.5 h14" stroke="#888" stroke-width="1" stroke-dasharray="1 1"/><path d="M1134.5 348.0 v14" stroke="#888" stroke-width="1" stroke-dasharray="1 1"/><path d="M1120.0 362.5 h14" stroke="#888" stroke-width="1" stroke-dasharray="1 1"/></g><path d="M1120.0 348.0 L1134.5 362.5" stroke="#444" stroke-width="1.35"/><rect x="981.5" y="376.6" width="22" height="22" rx="1.5" fill="#fafafa" stroke="#d3d3d3"/><g opacity="0.45"><path d="M986.5 381.0 v14" stroke="#888" stroke-width="1" stroke-dasharray="1 1"/><path d="M986.0 381.5 h14" stroke="#888" stroke-width="1" stroke-dasharray="1 1"/><path d="M993.5 381.0 v14" stroke="#888" stroke-width="1" stroke-dasharray="1 1"/><path d="M986.0 388.5 h14" stroke="#888" stroke-width="1" stroke-dasharray="1 1"/><path d="M1000.5 381.0 v14" stroke="#888" stroke-width="1" stroke-dasharray="1 1"/><path d="M986.0 395.5 h14" stroke="#888" stroke-width="1" stroke-dasharray="1 1"/></g><path d="M986.5 381.0 v14" stroke="#444" stroke-width="1.35"/><rect x="1008.4" y="376.6" width="22" height="22" rx="1.5" fill="#fafafa" stroke="#d3d3d3"/><g opacity="0.45"><path d="M1012.5 381.0 v14" stroke="#888" stroke-width="1" stroke-dasharray="1 1"/><path d="M1012.0 381.5 h14" stroke="#888" stroke-width="1" stroke-dasharray="1 1"/><path d="M1019.5 381.0 v14" stroke="#888" stroke-width="1" stroke-dasharray="1 1"/><path d="M1012.0 388.5 h14" stroke="#888" stroke-width="1" stroke-dasharray="1 1"/><path d="M1026.5 381.0 v14" stroke="#888" stroke-width="1" stroke-dasharray="1 1"/><path d="M1012.0 395.5 h14" stroke="#888" stroke-width="1" stroke-dasharray="1 1"/></g><path d="M1019.5 381.0 v14" stroke="#444" stroke-width="1.35"/><rect x="1035.3" y="376.6" width="22" height="22" rx="1.5" fill="#fafafa" stroke="#d3d3d3"/><g opacity="0.45"><path d="M1039.5 381.0 v14" stroke="#888" stroke-width="1" stroke-dasharray="1 1"/><path d="M1039.0 381.5 h14" stroke="#888" stroke-width="1" stroke-dasharray="1 1"/><path d="M1046.5 381.0 v14" stroke="#888" stroke-width="1" stroke-dasharray="1 1"/><path d="M1039.0 388.5 h14" stroke="#888" stroke-width="1" stroke-dasharray="1 1"/><path d="M1053.5 381.0 v14" stroke="#888" stroke-width="1" stroke-dasharray="1 1"/><path d="M1039.0 395.5 h14" stroke="#888" stroke-width="1" stroke-dasharray="1 1"/></g><path d="M1053.5 381.0 v14" stroke="#444" stroke-width="1.35"/><rect x="1062.2" y="376.6" width="22" height="22" rx="1.5" fill="#fafafa" stroke="#d3d3d3"/><g opacity="0.45"><path d="M1066.5 381.0 v14" stroke="#888" stroke-width="1" stroke-dasharray="1 1"/><path d="M1066.0 381.5 h14" stroke="#888" stroke-width="1" stroke-dasharray="1 1"/><path d="M1073.5 381.0 v14" stroke="#888" stroke-width="1" stroke-dasharray="1 1"/><path d="M1066.0 388.5 h14" stroke="#888" stroke-width="1" stroke-dasharray="1 1"/><path d="M1080.5 381.0 v14" stroke="#888" stroke-width="1" stroke-dasharray="1 1"/><path d="M1066.0 395.5 h14" stroke="#888" stroke-width="1" stroke-dasharray="1 1"/></g><path d="M1066.0 381.5 h14" stroke="#444" stroke-width="1.35"/><rect x="1089.1" y="376.6" width="22" height="22" rx="1.5" fill="#fafafa" stroke="#d3d3d3"/><g opacity="0.45"><path d="M1093.5 381.0 v14" stroke="#888" stroke-width="1" stroke-dasharray="1 1"/><path d="M1093.0 381.5 h14" stroke="#888" stroke-width="1" stroke-dasharray="1 1"/><path d="M1100.5 381.0 v14" stroke="#888" stroke-width="1" stroke-dasharray="1 1"/><path d="M1093.0 388.5 h14" stroke="#888" stroke-width="1" stroke-dasharray="1 1"/><path d="M1107.5 381.0 v14" stroke="#888" stroke-width="1" stroke-dasharray="1 1"/><path d="M1093.0 395.5 h14" stroke="#888" stroke-width="1" stroke-dasharray="1 1"/></g><path d="M1093.0 388.5 h14" stroke="#444" stroke-width="1.35"/><rect x="1116.0" y="376.6" width="22" height="22" rx="1.5" fill="#fafafa" stroke="#d3d3d3"/><g opacity="0.45"><path d="M1120.5 381.0 v14" stroke="#888" stroke-width="1" stroke-dasharray="1 1"/><path d="M1120.0 381.5 h14" stroke="#888" stroke-width="1" stroke-dasharray="1 1"/><path d="M1127.5 381.0 v14" stroke="#888" stroke-width="1" stroke-dasharray="1 1"/><path d="M1120.0 388.5 h14" stroke="#888" stroke-width="1" stroke-dasharray="1 1"/><path d="M1134.5 381.0 v14" stroke="#888" stroke-width="1" stroke-dasharray="1 1"/><path d="M1120.0 395.5 h14" stroke="#888" stroke-width="1" stroke-dasharray="1 1"/></g><path d="M1120.0 395.5 h14" stroke="#444" stroke-width="1.35"/><rect x="1209" y="190" width="44" height="34" fill="#7d858c"/><rect x="1223.5" y="201.5" width="15" height="11" rx="1" fill="none" stroke="#fff" stroke-width="1.4"/><path d="M1223.5 204 h15 M1223.5 210 h15 M1226 201.5 v11 M1236 201.5 v11" stroke="#fff" stroke-width="1"/><rect x="1222.3" y="245" width="17.6" height="11.9" fill="#a8a8a8"/><rect x="1223.7" y="246.6" width="4.4" height="2.3" fill="#f1f1f1"/><rect x="1223.7" y="250.0" width="4.4" height="2.3" fill="#f1f1f1"/><rect x="1223.7" y="253.5" width="4.4" height="2.3" fill="#f1f1f1"/><rect x="1229.2" y="246.6" width="4.4" height="2.3" fill="#f1f1f1"/><rect x="1229.2" y="250.0" width="4.4" height="2.3" fill="#f1f1f1"/><rect x="1229.2" y="253.5" width="4.4" height="2.3" fill="#f1f1f1"/><rect x="1234.8" y="246.6" width="4.4" height="2.3" fill="#f1f1f1"/><rect x="1234.8" y="250.0" width="4.4" height="2.3" fill="#f1f1f1"/><rect x="1234.8" y="253.5" width="4.4" height="2.3" fill="#f1f1f1"/><path d="M1229.5 286.9 H1223.9 V295.2 H1228" fill="none" stroke="#a8a8a8" stroke-width="1.2"/><path d="M1233.2 286.9 v3" fill="none" stroke="#a8a8a8" stroke-width="1.2"/><circle cx="1233.6" cy="295.4" r="5.2" fill="none" stroke="#a8a8a8" stroke-width="1.2"/><rect x="1224.2" y="329.5" width="14.4" height="14.5" fill="none" stroke="#a8a8a8" stroke-width="1.2"/><circle cx="1227.7" cy="333.3" r="1.2" fill="none" stroke="#a8a8a8" stroke-width="1"/><path d="M1224.4 342 l4.2 -3.6 l3 2.2 l3.6 -3.2 l3.4 2.8" fill="none" stroke="#a8a8a8" stroke-width="1.15"/><rect x="1223.9" y="382" width="3.2" height="6" rx="1" fill="none" stroke="#a8a8a8" stroke-width="1.2"/><rect x="1229.6" y="377.3" width="3.2" height="10.7" rx="1" fill="none" stroke="#a8a8a8" stroke-width="1.2"/><rect x="1235.4" y="373.4" width="3.3" height="14.6" rx="1" fill="none" stroke="#a8a8a8" stroke-width="1.2"/><path d="M1229.5 417.8 h5.8 M1231.3 417.8 v12.8 M1234.1 417.8 v12.8" stroke="#a8a8a8" stroke-width="1.3" fill="none"/><path d="M1230 417.4 a3.4 3.4 0 0 0 0 6.8 h1.3 v-6.8 z" fill="#a8a8a8"/><text x="1224.6" y="469.8" font-family="Liberation Sans" font-size="14.5" fill="#a8a8a8" textLength="12.3" lengthAdjust="spacingAndGlyphs">Ta</text><path d="M1225.3 476.6 q5.8 -5.6 11.6 0" fill="none" stroke="#a8a8a8" stroke-width="1.2"/></svg>
<div class="a" style="left:5px;top:768px;width:1248px;height:1px;background:#cbcbcb"></div>
<div class="a" style="left:173.5px;top:768px;width:62px;height:28px;background:#fff;border-left:1px solid #dadada;border-right:1px solid #dadada"></div>
<div class="a" style="left:173.5px;top:768px;width:62px;height:3.5px;background:#40865c"></div>
<div class="t" style="left:185.5px;top:775px;font-size:12px;font-weight:bold;color:#111">Sheet1</div>
<div class="t" style="left:1125px;top:776px;font-size:12px;font-weight:bold;color:#444">Zoom 100%</div>
<svg style="left:0;top:0" width="1258" height="800"><path d="M24 777 v11" stroke="#a6a6a6" stroke-width="1.6"/><path d="M34.5 777 v11 l-8.5 -5.5 z" fill="#a6a6a6"/><path d="M60 777 v11 l-9 -5.5 z" fill="#a6a6a6"/><path d="M75.5 777 v11 l9 -5.5 z" fill="#a6a6a6"/><path d="M100.5 777 v11 l8.5 -5.5 z" fill="#a6a6a6"/><path d="M111 777 v11" stroke="#a6a6a6" stroke-width="1.6"/><path d="M132 769.5 V795" stroke="#cbcbcb"/><path d="M153.3 776 v13 M146.8 782.5 h13" stroke="#444" stroke-width="1.3"/><path d="M1094 782.5 h11.5" stroke="#444" stroke-width="1.3"/><path d="M1218.5 776 v13 M1212 782.5 h13" stroke="#444" stroke-width="1.3"/></svg>
<div class="a" style="left:47px;top:799px;width:1210px;height:1px;background:#d9d9d9"></div>
</body></html>
